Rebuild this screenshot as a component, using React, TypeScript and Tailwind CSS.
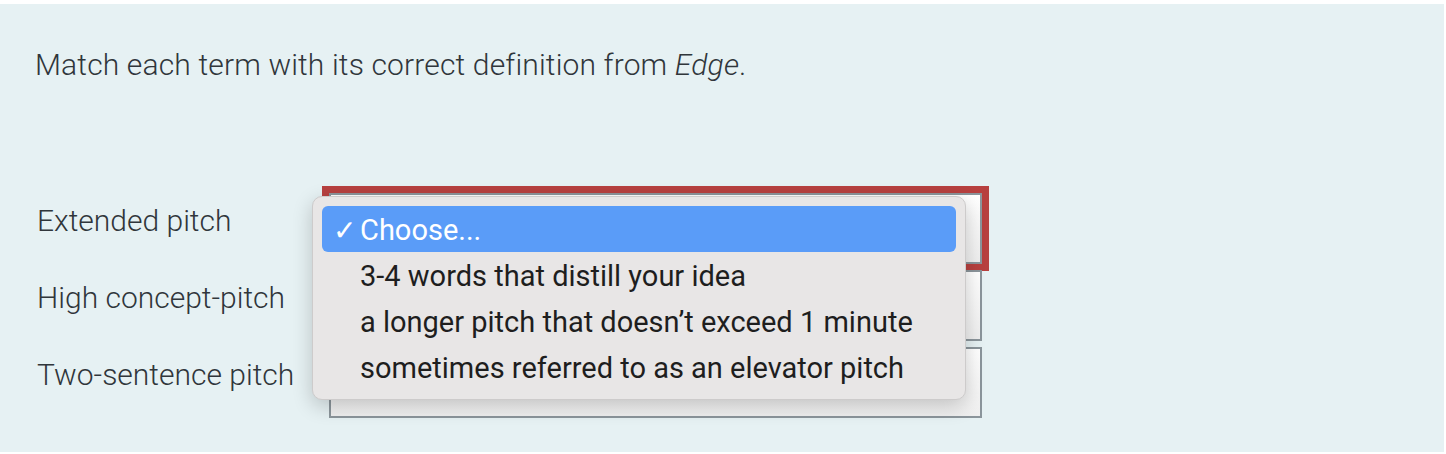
import React from 'react';

const TERMS = ['Extended pitch', 'High concept-pitch', 'Two-sentence pitch'];

const OPTIONS = [
  '3-4 words that distill your idea',
  'a longer pitch that doesn\u2019t exceed 1 minute',
  'sometimes referred to as an elevator pitch',
];

export default function App() {
  return (
    <div className="w-full h-[454px] bg-white pt-[4px] pb-[2px] pr-[2px]">
      <div className="relative h-full bg-[#e6f1f3] pl-[35px] pt-[43px] font-['Roboto',sans-serif] font-light text-[#30363b]">
        <p className="text-[30px] leading-[36px] tracking-[0.15px]">
          Match each term with its correct definition from <em>Edge</em>.
        </p>

        {/* term rows with select boxes */}
        <div className="mt-[110px] flex flex-col gap-[6px]">
          {TERMS.map((term, i) => (
            <div key={term} className="flex">
              <div className="w-[294px] pl-[2px] pt-[10px] text-[30px] leading-[36px]">{term}</div>
              <div
                className={`h-[71px] w-[653px] border-2 border-[#8b959b] bg-gradient-to-b from-white to-[#efefef] ${
                  i === 0 ? 'outline-[7px] outline-solid outline-[#b7403f]' : ''
                }`}
              />
            </div>
          ))}
        </div>

        {/* open native select menu */}
        <div className="absolute left-[312px] top-[192px] w-[654px] rounded-[10px] border border-[#cdcbcb] bg-[#e8e6e6] p-[9px] shadow-[0_6px_20px_rgba(0,0,0,0.2)] font-['Roboto',sans-serif] font-normal text-[#1e1e1e]">
          <div className="flex h-[46px] items-center rounded-[6px] bg-[#5a9cf8] pl-[11px] pt-[4px] text-[29px] text-white">
            <span className="w-[27px] text-[28px] leading-none">✓</span>
            <span>Choose...</span>
          </div>
          {OPTIONS.map((opt) => (
            <div key={opt} className="flex h-[46px] items-center pl-[38px] pt-[4px] text-[29px]">
              {opt}
            </div>
          ))}
        </div>
      </div>
    </div>
  );
}
